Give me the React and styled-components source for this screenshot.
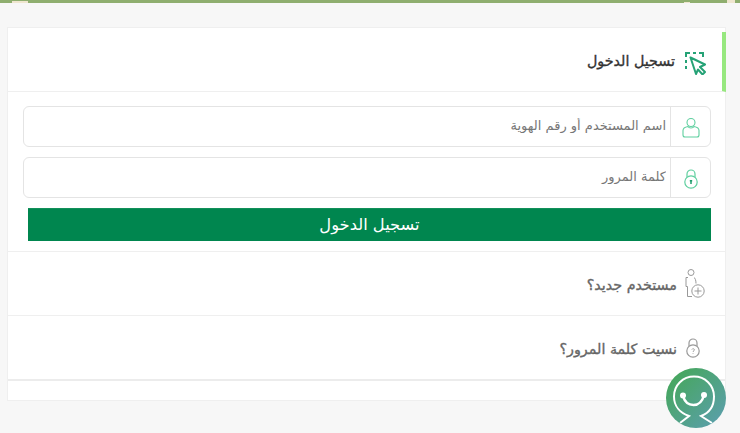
import React from "react";
import styled, { createGlobalStyle } from "styled-components";

const Global = createGlobalStyle`
  html, body { margin: 0; padding: 0; background: #f7f7f7; overflow: hidden; }
  body { font-family: "DejaVu Sans", sans-serif; }
`;

const TopBar = styled.div`
  height: 3px;
  background:
    linear-gradient(#efe6cf, #efe6cf) 12px 1px / 16px 2px no-repeat,
    linear-gradient(#efe6cf, #efe6cf) 684px 2px / 6px 1px no-repeat,
    linear-gradient(#efe6cf, #efe6cf) 727px 0 / 8px 3px no-repeat,
    #8fae6f;
`;

const Page = styled.div`
  direction: rtl;
  padding: 24px 14px 0 7px;
  height: 406px;
  box-sizing: border-box;
`;

const Card = styled.section`
  height: 374px;
  background: #fff;
  border: 1px solid #efefef;
  box-sizing: border-box;
`;

const Header = styled.header`
  height: 60px;
  box-sizing: border-box;
  margin: 4px -1px 0 0;
  border-right: 4px solid #97e87f;
  border-bottom: 1px solid #efefef;
  display: flex;
  align-items: center;
  gap: 10px;
  padding: 0 16px 2px 0;
`;

const Title = styled.h1`
  margin: 0;
  font-size: 14.3px;
  font-weight: 400;
  -webkit-text-stroke: 0.35px ${(p) => p.$color || "#333"};
  color: ${(p) => p.$color || "#333"};
`;

const RowTitle = styled(Title)`
  margin-top: 2px;
`;

const Form = styled.form`
  padding: 14px 14px 10px 15px;
  display: flex;
  flex-direction: column;
  gap: 10px;
  border-bottom: 1px solid #efefef;
`;

const Field = styled.label`
  height: 41px;
  box-sizing: border-box;
  display: flex;
  border: 1px solid #e4e4e4;
  border-radius: 6px;
  background: #fff;
`;

const FieldIcon = styled.span`
  width: 40px;
  flex: none;
  border-left: 1px solid #e4e4e4;
  display: flex;
  align-items: center;
  justify-content: center;
  padding-top: 2px;
  box-sizing: border-box;
`;

const Input = styled.input`
  flex: 1;
  min-width: 0;
  border: 0;
  outline: 0;
  padding: 0 4px 2px;
  background: transparent;
  direction: rtl;
  font: 13px "DejaVu Sans", sans-serif;
  &::placeholder { color: #777; opacity: 1; }
`;

const Submit = styled.button`
  height: 33px;
  margin-left: 5px;
  border: 0;
  border-top: 1px solid #12905a;
  background: #00864f;
  color: #fff;
  font: 16.3px "DejaVu Sans", sans-serif;
  padding: 0 0 2px;
`;

const LinkRow = styled.a`
  height: ${(p) => p.$height}px;
  box-sizing: border-box;
  display: flex;
  align-items: center;
  gap: ${(p) => p.$gap}px;
  padding: 0 ${(p) => p.$pad}px 0 0;
  border-bottom: ${(p) => (p.$thick ? "2px solid #ececec" : "1px solid #efefef")};
`;

const Chat = styled.div`
  position: fixed;
  left: 666px;
  top: 368px;
  width: 60px;
  height: 60px;
  border-radius: 50%;
  overflow: hidden;
  background: linear-gradient(135deg, #46a75c 10%, #5a9fa8 90%);
`;

const BottomLine = styled.div`
  margin: 31px 10px 0 10px;
  height: 1px;
  background: #ececec;
`;

const CursorSvg = styled.svg`
  margin-top: 6px;
  flex: none;
`;

const CursorIcon = () => (
  <CursorSvg width="21" height="23" viewBox="0 0 21 23" fill="none" stroke="#25a276" strokeWidth="2">
    <path d="M1 5V1H5M8 1h3M14 1h4V5M1 8v3M1 14v3" />
    <path d="M5.500 5.500L20 12.500L15 15L20 20L17.500 22.500L13 17.500L11 22Z" strokeLinejoin="round" />
  </CursorSvg>
);

const UserIcon = () => (
  <svg width="18" height="21" viewBox="0 0 18 21" fill="none" stroke="#5fcf9f" strokeWidth="1.100">
    <circle cx="9" cy="5.500" r="4" />
    <path d="M6 9.500C3 10 1 11 1 13.500V18C1 19.500 2 20 3 20H15C16 20 17 19.500 17 18V13.500C17 11 15 10 12 9.500C11 11.500 7 11.500 6 9.500Z" />
  </svg>
);

const LockIcon = ({ color = "#5fcf9f", mark }) => (
  <svg width="16" height="20" viewBox="0 0 16 20" fill="none" stroke={color} strokeWidth="1.200">
    <path d="M4 8V5a4 4 0 0 1 8 0v3" />
    <circle cx="8" cy="13" r="6.200" />
    {mark === "key" ? (
      <path d="M8 11.500v3.500M6.800 11.800h2.400" stroke="#1f9d6d" strokeWidth="1.500" />
    ) : (
      <path d="M6.800 11.500c.5-1.200 2.800-1 2.600.4-.1.900-1.400 1-1.400 2.100M8 15.300v.7" strokeWidth="0.900" />
    )}
  </svg>
);

const NewUserIcon = () => (
  <svg width="20" height="29" viewBox="0 0 20 29" fill="none" stroke="#999" strokeWidth="1">
    <circle cx="6" cy="3.500" r="3" />
    <path d="M3 8.500H1V17.500H2.500V27.500H7M9 8.500C10 9 11 11 11 14.500" />
    <circle cx="13" cy="22" r="6.200" />
    <path d="M13 18.500v7M9.500 22h7" />
  </svg>
);

const ChatFace = () => (
  <svg width="60" height="60" viewBox="0 0 60 60" fill="none" stroke="#fff">
    <path d="M14 55L23 48C14 45 8 38 8 28.500C8 17 17 8.500 28 8.500C39 8.500 48 17 48 28.500C48 38 43 45 35 48L46 55" strokeWidth="2" />
    <path d="M17 28C19 35 24 37 27.500 37C31 37 36 35 38 27" strokeWidth="2.500" strokeLinecap="round" />
    <circle cx="17" cy="27.500" r="3" fill="#fff" stroke="none" />
    <circle cx="38" cy="27" r="3" fill="#fff" stroke="none" />
  </svg>
);

export default function App() {
  return (
    <>
      <Global />
      <TopBar />
      <Page>
        <Card>
          <Header>
            <CursorIcon />
            <Title>تسجيل الدخول</Title>
          </Header>
          <Form onSubmit={(e) => e.preventDefault()}>
            <Field>
              <FieldIcon><UserIcon /></FieldIcon>
              <Input placeholder="اسم المستخدم أو رقم الهوية" />
            </Field>
            <Field>
              <FieldIcon><LockIcon mark="key" /></FieldIcon>
              <Input placeholder="كلمة المرور" />
            </Field>
            <Submit>تسجيل الدخول</Submit>
          </Form>
          <LinkRow $height={64} $gap={8} $pad={20}>
            <NewUserIcon />
            <RowTitle $color="#666">مستخدم جديد؟</RowTitle>
          </LinkRow>
          <LinkRow $height={65} $gap={8} $pad={24} $thick>
            <LockIcon color="#999" mark="help" />
            <RowTitle $color="#666">نسيت كلمة المرور؟</RowTitle>
          </LinkRow>
        </Card>
        <BottomLine />
      </Page>
      <Chat><ChatFace /></Chat>
    </>
  );
}
